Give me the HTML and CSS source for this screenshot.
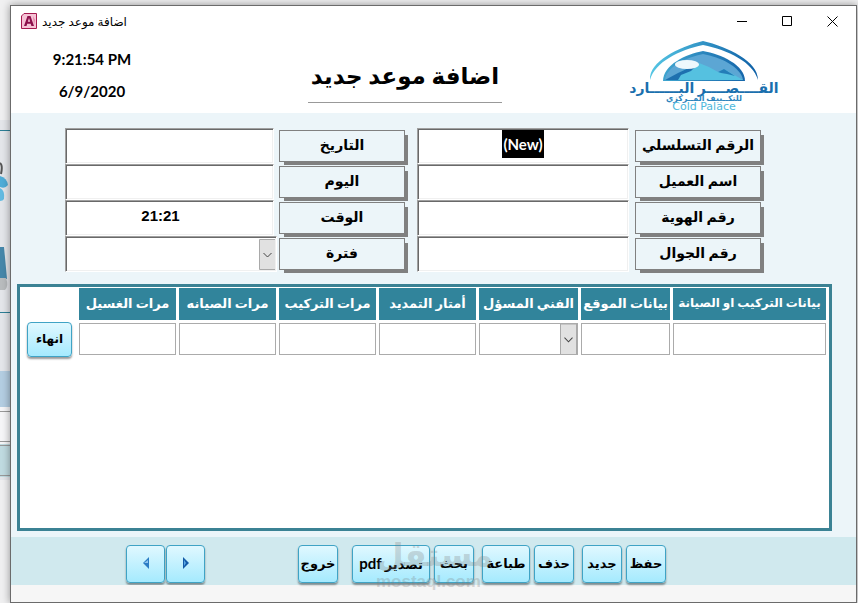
FILE: index.html
```html
<!DOCTYPE html>
<html lang="ar">
<head>
  <meta charset="UTF-8" />
  <meta name="viewport" content="width=device-width, initial-scale=1.0"/>
  <title>اضافة موعد جديد</title>
  <link rel="stylesheet" href="styles.css">
</head>
<body>
  <!-- form left open behind the window -->
  <svg class="backdrop" width="10" height="603" viewBox="0 0 10 603" aria-hidden="true">
    <rect y="120" width="10" height="360" fill="#e4e6ea"/>
    <path d="M0 130.500h10M0 312.500h10" stroke="#2d7f96"/>
    <path d="M0 163q3 2 1 11" fill="none" stroke="#555" stroke-width="2"/>
    <path d="M0 176q7 2 8 9q-3 4-8 2z" fill="#4fadd8"/>
    <path d="M0 188q5 2 4 11q-1 2-4 2z" fill="#62bbe2"/>
    <path d="M0 247h4l3 32H0z" fill="#4687aa"/>
    <path d="M0 278h6q3 8-1 12H0z" fill="#b9bcbe"/>
    <path d="M0 371h10v36H0z" fill="#b4cee2"/>
    <path d="M0 407h10v37H0z" fill="#f6f6f8"/>
    <path d="M0 411.500h10M0 441.500h10" stroke="#999"/>
    <path d="M0 444h10v33H0z" fill="#c0dbe1"/>
    <path d="M0 445.500h10M0 475.500h10" stroke="#999"/>
  </svg>

  <main class="window">
    <div class="title-bar">
      <svg class="app-icon" width="16" height="16" viewBox="0 0 16 16" aria-hidden="true">
        <path d="M.5 3L3 .5h12.500v15H.5z" fill="#f6c3d6" stroke="#a4194f"/>
        <path d="M12 3l2 4-1 5z" fill="#e583a8"/>
        <path d="M3 13L6.500 3h3L13 13h-2.600l-.7-2.300H6.200L5.500 13zM6.800 8.700h2.400L8 4.900z" fill="#8c0f4b"/>
      </svg>
      <span class="window-title">اضافة موعد جديد</span>
      <div class="window-controls">
        <button type="button" aria-label="تصغير"><svg width="11" height="11" viewBox="0 0 11 11"><path d="M0 5.500h10"/></svg></button>
        <button type="button" aria-label="تكبير"><svg width="11" height="11" viewBox="0 0 11 11"><path d="M.5.5h9v9h-9z"/></svg></button>
        <button type="button" aria-label="اغلاق"><svg width="11" height="11" viewBox="0 0 11 11"><path d="M.5.5l10 10M10.500.5l-10 10"/></svg></button>
      </div>
    </div>

    <header class="header">
      <div class="clock">
        <p>9:21:54 PM</p>
        <p>6/9/2020</p>
      </div>
      <h1 class="main-title" dir="rtl">اضافة موعد جديد</h1>
      <svg class="logo" width="152" height="72" viewBox="0 0 152 72" role="img" aria-label="القصر البارد Cold Palace">
        <defs>
          <linearGradient id="arch"><stop offset="0" stop-color="#55c6e4"/><stop offset="1" stop-color="#0e5fa6"/></linearGradient>
          <linearGradient id="dome"><stop offset="0" stop-color="#3fa5cf"/><stop offset="1" stop-color="#1566aa"/></linearGradient>
        </defs>
        <path d="M21 40C20 21 50 7 74 1C99 7 129 21 129 40C124 22 99 10 74 5C50 10 26 22 21 40Z" fill="url(#arch)"/>
        <path d="M34 41C34 25 57 14 74 11C92 14 116 25 116 41Z" fill="url(#dome)"/>
        <path d="M36 40C37 27 58 17 74 14C91 17 112 27 114 40Z" fill="#5ca6d4"/>
        <path d="M36 40L48 34L60 27L70 23L80 27L89 32L95 29L114 40Z" fill="#55c1e0"/>
        <path d="M36 40L49 33L70 23L62 31L52 35L49 40Z" fill="#1e70af"/>
        <path d="M89 32l6-3 11 7-8-2-6-1z" fill="#247db8"/>
        <ellipse cx="58" cy="24.500" rx="12" ry="4.500" fill="#eef8fc"/>
        <text class="logo-name" x="75" y="53" text-anchor="middle" direction="rtl">القــــصــــر البــــــارد</text>
        <text class="logo-sub" x="75" y="61" text-anchor="middle" direction="rtl">للتكــييف المــركزي</text>
        <text class="logo-latin" x="75" y="70" text-anchor="middle">Cold Palace</text>
      </svg>
    </header>

    <form class="content">
      <div class="fields">
        <div class="field-group date-group">
          <input id="date" type="text"><label for="date">التاريخ</label>
          <input id="day" type="text"><label for="day">اليوم</label>
          <input id="time" type="text" value="21:21"><label for="time">الوقت</label>
          <select id="period"><option></option></select><label for="period">فترة</label>
        </div>
        <div class="field-group client-group">
          <input id="serial" type="text" value="(New)"><label for="serial">الرقم التسلسلي</label>
          <input id="client" type="text"><label for="client">اسم العميل</label>
          <input id="identity" type="text"><label for="identity">رقم الهوية</label>
          <input id="mobile" type="text"><label for="mobile">رقم الجوال</label>
        </div>
      </div>

      <div class="details">
        <table>
          <colgroup>
            <col class="col-end"><col class="col-count"><col class="col-count"><col class="col-count"><col class="col-count"><col class="col-tech"><col class="col-site"><col class="col-info">
          </colgroup>
          <thead>
            <tr>
              <td></td>
              <th>مرات الغسيل</th>
              <th>مرات الصيانه</th>
              <th>مرات التركيب</th>
              <th>أمتار التمديد</th>
              <th>الفني المسؤل</th>
              <th>بيانات الموقع</th>
              <th class="long">بيانات التركيب او الصيانة</th>
            </tr>
          </thead>
          <tbody>
            <tr>
              <td class="end-cell"><button type="button" class="btn">انهاء</button></td>
              <td><input type="text" aria-label="مرات الغسيل"></td>
              <td><input type="text" aria-label="مرات الصيانه"></td>
              <td><input type="text" aria-label="مرات التركيب"></td>
              <td><input type="text" aria-label="أمتار التمديد"></td>
              <td><select aria-label="الفني المسؤل"><option></option></select></td>
              <td><input type="text" aria-label="بيانات الموقع"></td>
              <td><input type="text" aria-label="بيانات التركيب او الصيانة"></td>
            </tr>
          </tbody>
        </table>
      </div>
    </form>

    <footer class="toolbar">
      <div class="btn-group nav-group">
        <button type="button" class="btn" aria-label="السابق"><svg width="8" height="12" viewBox="0 0 8 12"><path d="M7 0v12L1 6z" fill="#2b7cc4"/><path d="M6 3v3H2z" fill="#8cc3ee"/></svg></button>
        <button type="button" class="btn" aria-label="التالي"><svg width="8" height="12" viewBox="0 0 8 12"><path d="M1 0v12l6-6z" fill="#145ba8"/><path d="M2 3v6l2-3z" fill="#5aa9e4"/></svg></button>
      </div>
      <div class="btn-group actions">
        <button type="button" class="btn exit">خروج</button>
        <button type="button" class="btn export" dir="rtl">تصدير <span class="latin">pdf</span></button>
        <button type="button" class="btn search">بحث</button>
        <button type="button" class="btn print">طباعة</button>
        <button type="button" class="btn delete">حذف</button>
        <button type="button" class="btn">جديد</button>
        <button type="button" class="btn">حفظ</button>
        <div class="watermark"><span>مستقل</span><small>mostaql.com</small></div>
      </div>
    </footer>
    <div class="status-bar"></div>
  </main>
</body>
</html>
```

FILE: styles.css
```css
* {
  margin: 0;
  padding: 0;
  box-sizing: border-box;
}

body {
  font-family: Lato, 'DejaVu Sans', sans-serif;
  font-size: 14px;
  font-weight: bold;
  color: #000;
  min-height: 100vh;
  padding: 5px 1px 0 10px;
  display: flex;
  background-color: #f0f0f1;
}

.backdrop {
  position: absolute;
  left: 0;
  top: 0;
}

button,
input,
select {
  font: inherit;
  color: inherit;
}

.window {
  position: relative;
  flex: 1;
  display: flex;
  flex-direction: column;
  border: 1px solid #6b6b6b;
  background-color: #fff;
  box-shadow: 0 0 8px rgba(0, 0, 0, 0.4);
}

.title-bar {
  display: flex;
  align-items: center;
  height: 30px;
  padding-left: 10px;
}

.window-title {
  flex: 1;
  margin-left: 5px;
  font-size: 12px;
  font-weight: normal;
}

.window-controls {
  display: flex;
  padding-right: 1px;
}

.window-controls button {
  width: 45px;
  height: 30px;
  border: none;
  background: none;
}

.window-controls path {
  fill: none;
  stroke: #000;
}

.header {
  display: grid;
  grid-template-columns: 170px 1fr 227px;
  height: 77px;
}

.clock {
  padding: 7px 8px 0 0;
  font-size: 15px;
  line-height: 32px;
  text-align: center;
}

.main-title {
  justify-self: center;
  align-self: start;
  margin-top: 20px;
  padding: 0 3px 7px;
  font-size: 23px;
  line-height: 39px;
  white-space: nowrap;
  border-bottom: 1px solid #999;
}

.logo {
  margin-top: 4px;
}

.logo-name {
  font-size: 14px;
  fill: #1a6fae;
}

.logo-sub {
  font-size: 8px;
  fill: #2c84bd;
}

.logo-latin {
  font-family: 'DejaVu Sans', sans-serif;
  font-size: 11px;
  font-weight: normal;
  fill: #4db8dc;
}

.content {
  flex: 1;
  display: flex;
  flex-direction: column;
  padding: 15px 24px 6px 6px;
  background-color: #ecf5f9;
}

.fields {
  display: flex;
  gap: 9px;
  padding: 0 68px 0 48px;
}

.field-group {
  display: grid;
  grid-template-columns: 212fr 129fr;
  grid-auto-rows: 36px;
}

.date-group {
  flex: 343;
  column-gap: 2px;
}

.client-group {
  flex: 347;
  column-gap: 6px;
}

.fields input,
.fields select {
  width: 100%;
  height: 36px;
  border: 1px solid;
  border-color: #a0a0a0 #fff #fff #a0a0a0;
  box-shadow: inset 1px 1px 0 #696969, inset -1px -1px 0 #f0f0f0;
  background-color: #fff;
  text-align: center;
  padding-bottom: 5px;
}

.date-group input {
  width: calc(100% - 3px);
  padding-right: 18px;
  font-family: 'Liberation Sans', sans-serif;
  font-size: 15px;
}

.fields label {
  height: 32px;
  margin: 2px 3px 0 0;
  border: 1px solid #808080;
  box-shadow: 4px 4px 0 -1px #808080;
  background-color: #ecf5f9;
  font-size: 14px;
  line-height: 27px;
  text-align: center;
  white-space: nowrap;
}

#serial {
  color: #fff;
  font-size: 15px;
  background: linear-gradient(#000, #000) center 1px / 42px 28px no-repeat #fff;
}

select {
  appearance: none;
  border-radius: 0;
  background: #fff url("data:image/svg+xml,%3Csvg xmlns='http://www.w3.org/2000/svg' width='17' height='31'%3E%3Cpath d='M.5.5h16v30H.5z' fill='%23e1e1e1' stroke='%23a9a9a9'/%3E%3Cpath d='M4.500 14l4 4 4-4' fill='none' stroke='%23444'/%3E%3C/svg%3E") right center no-repeat;
}

.details {
  flex: 1;
  margin-top: 12px;
  border: 3px solid #3b8294;
  background-color: #fff;
}

.details table {
  width: 100%;
  table-layout: fixed;
  border-spacing: 3px 1px;
}

.col-end { width: 53px; }
.col-count { width: 97px; }
.col-tech { width: 99px; }
.col-site { width: 89px; }
.col-info { width: 153px; }

.details th {
  height: 32px;
  background-color: #31849b;
  color: #fff;
  font-size: 13px;
  line-height: 26px;
  padding-bottom: 2px;
  white-space: nowrap;
}

.details .long {
  font-size: 12px;
}

.details tbody td {
  padding-top: 2px;
  vertical-align: top;
}

.details input,
.details select {
  display: block;
  width: 100%;
  height: 32px;
  border: 1px solid #ababab;
}

.details .end-cell {
  padding: 1px 4px 0;
}

.btn {
  min-width: 40px;
  height: 38px;
  padding-bottom: 3px;
  border: 1px solid #3fa3c5;
  border-radius: 4px;
  background: linear-gradient(#e0f8ff, #a5eafe);
  box-shadow: 0 2px 2px rgba(0, 0, 0, 0.4);
  font-size: 13px;
  white-space: nowrap;
}

.btn .latin {
  font-size: 15px;
}

.end-cell .btn {
  width: 100%;
  height: 35px;
  font-size: 12px;
}

.toolbar {
  display: flex;
  justify-content: space-between;
  height: 48px;
  padding: 8px 190px 0 115px;
  background-color: #d0e9ee;
}

.btn-group {
  display: flex;
}

.nav-group .btn {
  min-width: 39px;
  padding-bottom: 0;
}

.nav-group {
  gap: 1px;
}

.actions {
  position: relative;
  gap: 4px;
}

.actions .export {
  width: 78px;
}

.actions .print {
  width: 48px;
}

.exit {
  margin-right: 10px;
}

.search {
  margin-right: 4px;
}

.delete {
  margin-right: 4px;
}

.watermark {
  position: absolute;
  left: 78px;
  top: -11px;
  width: 104px;
  color: rgba(130, 130, 130, 0.3);
  text-align: center;
  pointer-events: none;
}

.watermark span {
  display: block;
  font-size: 32px;
  line-height: 39px;
}

.watermark small {
  display: block;
  font-family: 'Liberation Sans', sans-serif;
  font-size: 17px;
  line-height: 18px;
}

.status-bar {
  height: 17px;
  background-color: #f6f6f6;
}
```
